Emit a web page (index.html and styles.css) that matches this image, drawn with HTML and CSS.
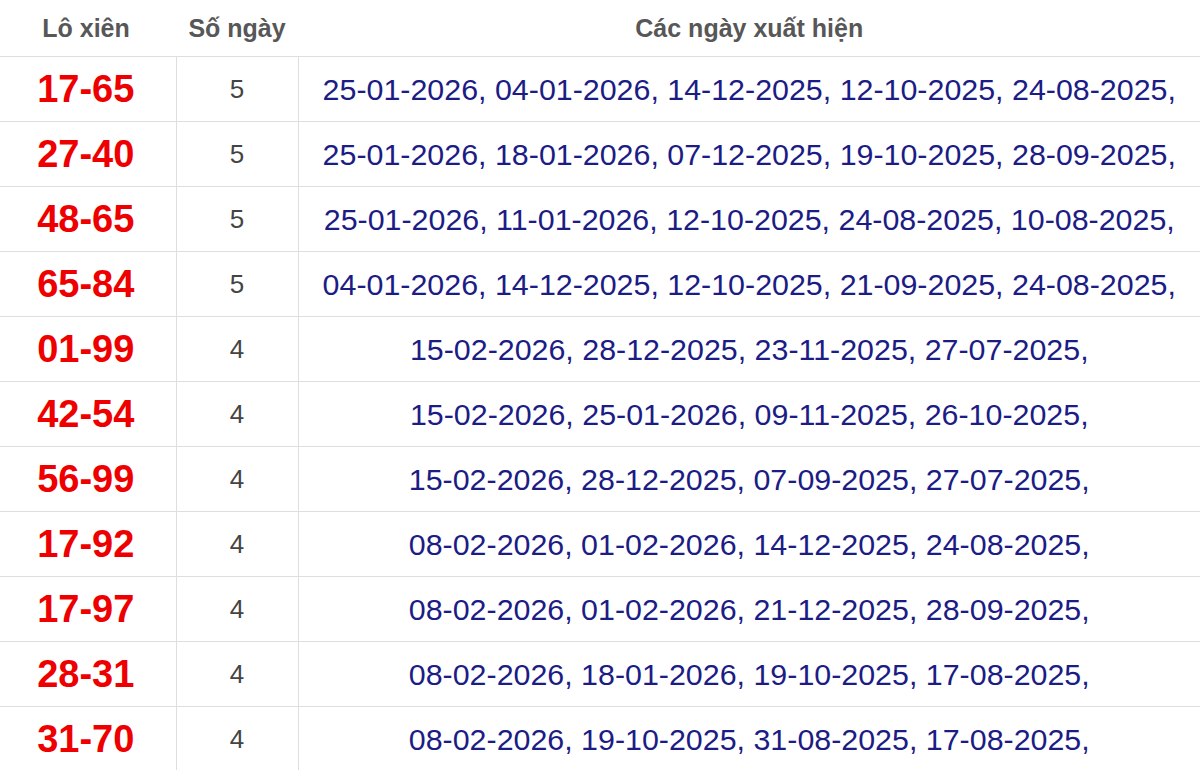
FILE: index.html
```html
<!DOCTYPE html>
<html lang="vi">
<head>
<meta charset="utf-8">
<title>Lô xiên</title>
<link rel="stylesheet" href="styles.css">
</head>
<body>
<table class="lx-table">
  <colgroup>
    <col class="c1">
    <col class="c2">
    <col class="c3">
  </colgroup>
  <thead>
    <tr>
      <th class="h-pair">Lô xiên</th>
      <th>Số ngày</th>
      <th>Các ngày xuất hiện</th>
    </tr>
  </thead>
  <tbody>
    <tr><td class="pair">17-65</td><td class="count">5</td><td class="dates">25-01-2026, 04-01-2026, 14-12-2025, 12-10-2025, 24-08-2025,</td></tr>
    <tr><td class="pair">27-40</td><td class="count">5</td><td class="dates">25-01-2026, 18-01-2026, 07-12-2025, 19-10-2025, 28-09-2025,</td></tr>
    <tr><td class="pair">48-65</td><td class="count">5</td><td class="dates">25-01-2026, 11-01-2026, 12-10-2025, 24-08-2025, 10-08-2025,</td></tr>
    <tr><td class="pair">65-84</td><td class="count">5</td><td class="dates">04-01-2026, 14-12-2025, 12-10-2025, 21-09-2025, 24-08-2025,</td></tr>
    <tr><td class="pair">01-99</td><td class="count">4</td><td class="dates">15-02-2026, 28-12-2025, 23-11-2025, 27-07-2025,</td></tr>
    <tr><td class="pair">42-54</td><td class="count">4</td><td class="dates">15-02-2026, 25-01-2026, 09-11-2025, 26-10-2025,</td></tr>
    <tr><td class="pair">56-99</td><td class="count">4</td><td class="dates">15-02-2026, 28-12-2025, 07-09-2025, 27-07-2025,</td></tr>
    <tr><td class="pair">17-92</td><td class="count">4</td><td class="dates">08-02-2026, 01-02-2026, 14-12-2025, 24-08-2025,</td></tr>
    <tr><td class="pair">17-97</td><td class="count">4</td><td class="dates">08-02-2026, 01-02-2026, 21-12-2025, 28-09-2025,</td></tr>
    <tr><td class="pair">28-31</td><td class="count">4</td><td class="dates">08-02-2026, 18-01-2026, 19-10-2025, 17-08-2025,</td></tr>
    <tr><td class="pair">31-70</td><td class="count">4</td><td class="dates">08-02-2026, 19-10-2025, 31-08-2025, 17-08-2025,</td></tr>
  </tbody>
</table>
</body>
</html>
```

FILE: styles.css
```css
html, body {
  margin: 0;
  padding: 0;
  background: #ffffff;
}

body {
  font-family: "Liberation Sans", Arial, sans-serif;
  overflow: hidden;
}

.lx-table {
  width: 1201px;
  border-collapse: collapse;
  table-layout: fixed;
}

.c1 { width: 176px; }
.c2 { width: 122px; }
.c3 { width: auto; }

.lx-table th {
  height: 56px;
  padding: 0;
  font-size: 25px;
  font-weight: bold;
  color: #575757;
  text-align: center;
  vertical-align: middle;
  border-bottom: 1px solid #dedede;
}

.lx-table th.h-pair {
  padding-right: 4px;
}

.lx-table td {
  height: 64px;
  padding: 0;
  text-align: center;
  vertical-align: middle;
  border: 1px solid #dedede;
  white-space: nowrap;
}

.lx-table td:first-child {
  border-left: none;
}

.pair {
  padding-right: 4px !important;
  font-size: 38px;
  font-weight: bold;
  color: #ee0000;
}

.count {
  font-size: 26px;
  color: #444444;
}

.dates {
  font-size: 30.4px;
  color: #1c1c85;
}
```
